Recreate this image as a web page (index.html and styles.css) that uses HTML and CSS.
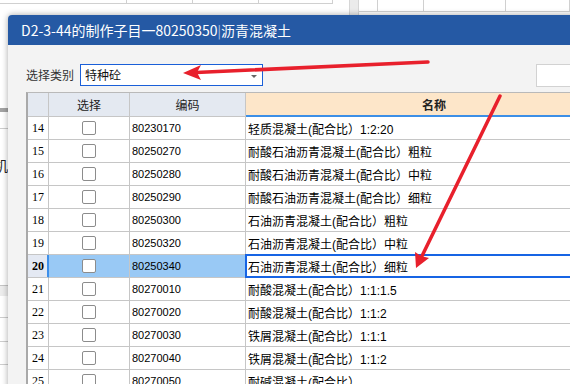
FILE: index.html
```html
<!DOCTYPE html>
<html lang="zh-CN">
<head>
    <meta charset="UTF-8">
    <title>制作子目</title>
    <link rel="stylesheet" href="styles.css">
</head>
<body>
<div class="app">
    <div class="topbar">
        <div class="tcell" style="width:127px"></div>
        <div class="tcell" style="width:66px"></div>
        <div class="tcell" style="width:66px"></div>
        <div class="tcell" style="width:74px"></div>
        <div class="tgap"></div>
        <div class="tscroll"></div>
        <div class="tcell tall" style="width:19px"></div>
        <div class="tcell tall" style="width:46px"></div>
        <div class="tcell tall" style="width:82px"></div>
        <div class="tcell tall" style="width:64px"></div>
    </div>
    <div class="side">
        <div class="s-gap"></div>
        <div class="s-band"></div>
        <div class="s-line"></div>
        <div class="s-text">机</div>
        <div class="s-grey"></div>
        <div class="s-line" style="height:22px"></div>
        <div class="s-line" style="height:24px"></div>
        <div class="s-line" style="height:23px"></div>
    </div>

    <div class="dialog">
        <div class="title">D2-3-44的制作子目一80250350<span class="bar">|</span>沥青混凝土</div>
        <div class="dlg-body">
            <div class="toolbar">
                <span class="label">选择类别</span>
                <div class="select">特种砼<span class="caret"></span></div>
                <div class="search"></div>
            </div>

            <div class="grid">
                <div class="row head">
                    <div class="cell num"></div>
                    <div class="cell chk">选择</div>
                    <div class="cell code">编码</div>
                    <div class="cell name">名称</div>
                </div>
                <div class="row">
                    <div class="cell num">14</div>
                    <div class="cell chk"><span class="box"></span></div>
                    <div class="cell code">80230170</div>
                    <div class="cell name">轻质混凝土(配合比）1:2:20</div>
                </div>
                <div class="row">
                    <div class="cell num">15</div>
                    <div class="cell chk"><span class="box"></span></div>
                    <div class="cell code">80250270</div>
                    <div class="cell name">耐酸石油沥青混凝土(配合比）粗粒</div>
                </div>
                <div class="row">
                    <div class="cell num">16</div>
                    <div class="cell chk"><span class="box"></span></div>
                    <div class="cell code">80250280</div>
                    <div class="cell name">耐酸石油沥青混凝土(配合比）中粒</div>
                </div>
                <div class="row">
                    <div class="cell num">17</div>
                    <div class="cell chk"><span class="box"></span></div>
                    <div class="cell code">80250290</div>
                    <div class="cell name">耐酸石油沥青混凝土(配合比）细粒</div>
                </div>
                <div class="row">
                    <div class="cell num">18</div>
                    <div class="cell chk"><span class="box"></span></div>
                    <div class="cell code">80250300</div>
                    <div class="cell name">石油沥青混凝土(配合比）粗粒</div>
                </div>
                <div class="row">
                    <div class="cell num">19</div>
                    <div class="cell chk"><span class="box"></span></div>
                    <div class="cell code">80250320</div>
                    <div class="cell name">石油沥青混凝土(配合比）中粒</div>
                </div>
                <div class="row sel">
                    <div class="cell num">20</div>
                    <div class="cell chk"><span class="box"></span></div>
                    <div class="cell code">80250340</div>
                    <div class="cell name">石油沥青混凝土(配合比）细粒</div>
                </div>
                <div class="row">
                    <div class="cell num">21</div>
                    <div class="cell chk"><span class="box"></span></div>
                    <div class="cell code">80270010</div>
                    <div class="cell name">耐酸混凝土(配合比）1:1:1.5</div>
                </div>
                <div class="row">
                    <div class="cell num">22</div>
                    <div class="cell chk"><span class="box"></span></div>
                    <div class="cell code">80270020</div>
                    <div class="cell name">耐酸混凝土(配合比）1:1:2</div>
                </div>
                <div class="row">
                    <div class="cell num">23</div>
                    <div class="cell chk"><span class="box"></span></div>
                    <div class="cell code">80270030</div>
                    <div class="cell name">铁屑混凝土(配合比）1:1:1</div>
                </div>
                <div class="row">
                    <div class="cell num">24</div>
                    <div class="cell chk"><span class="box"></span></div>
                    <div class="cell code">80270040</div>
                    <div class="cell name">铁屑混凝土(配合比）1:1:2</div>
                </div>
                <div class="row">
                    <div class="cell num">25</div>
                    <div class="cell chk"><span class="box"></span></div>
                    <div class="cell code">80270050</div>
                    <div class="cell name">耐碱混凝土(配合比）</div>
                </div>
            </div>
        </div>
    </div>

    <!-- red annotation arrows -->
    <svg class="marks" width="570" height="384" viewBox="0 0 570 384">
        <line x1="428" y1="62" x2="196" y2="72.5" stroke="#e8202c" stroke-width="3.5" stroke-linecap="round"/>
        <polygon points="183,73 201,65 197,72.6 201,80" fill="#e8202c"/>
        <line x1="500" y1="96" x2="422" y2="256" stroke="#e8202c" stroke-width="3.5" stroke-linecap="round"/>
        <polygon points="416,268 415,252 421,256 429,258" fill="#e8202c"/>
    </svg>
</div>
</body>
</html>
```

FILE: styles.css
```css
html, body {
    margin: 0;
    padding: 0;
}
body {
    font-family: "Noto Sans CJK SC", sans-serif;
    background: #fff;
}
.app {
    position: relative;
    width: 570px;
    height: 384px;
    overflow: hidden;
    background: #fff;
}

/* the window behind the dialog */
.topbar {
    display: flex;
    height: 15px;
}
.tcell {
    height: 4px;
    border-right: 1px solid #d0d0d0;
    border-bottom: 1px solid #d0d0d0;
    box-sizing: border-box;
}
.tcell.tall {
    height: 12px;
}
.tgap {
    width: 16px;
}
.tscroll {
    width: 10px;
    height: 15px;
    background: #ebebeb;
    border-left: 1px solid #d6d6d6;
    border-right: 1px solid #d6d6d6;
    box-sizing: border-box;
}
.side {
    width: 8px;
}
.s-gap {
    height: 93px;
}
.s-band {
    height: 4px;
    background: #a3a3a3;
}
.s-line {
    height: 17px;
    border-bottom: 1px solid #cdcdcd;
    box-sizing: border-box;
}
.s-text {
    height: 156px;
    font-size: 14px;
    line-height: 16px;
    padding-top: 28px;
    margin-left: -6px;
    box-sizing: border-box;
    color: #222;
}
.s-grey {
    height: 11px;
    background: #ececec;
    border-top: 1px solid #c4c4c4;
    box-sizing: border-box;
}

/* dialog */
.dialog {
    position: absolute;
    left: 8px;
    top: 15px;
    width: 640px;
    height: 400px;
    background: #f3f3f3;
    border-top-left-radius: 4px;
    overflow: hidden;
    box-shadow: 0 0 6px rgba(0, 0, 0, 0.35);
}
.title {
    height: 30px;
    line-height: 30px;
    padding-left: 13px;
    background: #2559a4;
    color: #fff;
    font-size: 14px;
}
.title .bar {
    color: #b9cbe6;
    font-size: 13px;
}
.toolbar {
    display: flex;
    height: 47px;
    padding-top: 19px;
    padding-left: 18px;
    box-sizing: border-box;
    align-items: flex-start;
}
.label {
    font-size: 12px;
    color: #333;
    line-height: 22px;
    width: 54px;
}
.select {
    position: relative;
    width: 183px;
    height: 22px;
    line-height: 20px;
    padding-left: 4px;
    border: 1px solid #1a5fd8;
    background: #fff;
    box-sizing: border-box;
    font-size: 12px;
    color: #111;
}
.caret {
    position: absolute;
    right: 5px;
    top: 10px;
    border-left: 3px solid transparent;
    border-right: 3px solid transparent;
    border-top: 3px solid #666;
}
.search {
    margin-left: 273px;
    width: 60px;
    height: 23px;
    background: #fff;
    border: 1px solid #d2d2d2;
    box-sizing: border-box;
}

/* grid */
.grid {
    margin-left: 18px;
    width: 596px;
    border-top: 1px solid #b9b9b9;
    border-left: 2px solid #a9a9a9;
    background: #fff;
}
.row {
    display: flex;
    height: 23px;
}
.row.head {
    height: 24px;
}
.cell {
    display: flex;
    align-items: center;
    height: 100%;
    box-sizing: border-box;
    border-right: 1px solid #c6c6c6;
    border-bottom: 1px solid #c6c6c6;
    color: #000;
    white-space: nowrap;
}
.num {
    width: 21px;
    padding-left: 4px;
    font-family: "Liberation Serif", serif;
    font-size: 12px;
}
.chk {
    width: 81px;
    justify-content: center;
}
.code {
    width: 116px;
    padding-left: 2px;
    font-family: "Liberation Sans", sans-serif;
    font-size: 11px;
}
.name {
    width: 377px;
    padding-left: 2px;
    font-family: "Liberation Sans", "Noto Sans CJK SC", sans-serif;
    font-size: 12px;
}
.head .cell {
    background: #e4e9f1;
    font-family: "Noto Sans CJK SC", sans-serif;
    font-size: 12px;
    color: #222;
    justify-content: center;
    padding-left: 0;
}
.head .name {
    background: #fde6c9;
    font-weight: bold;
    border-bottom: 2px solid #3c8fe6;
}
.box {
    width: 14px;
    height: 14px;
    border: 1px solid #8c8c8c;
    border-radius: 2px;
    background: #fff;
    box-sizing: border-box;
}
.sel .num {
    background: #e4e9f3;
    font-weight: bold;
    border-right-color: #3d8fea;
    box-shadow: inset -1px 0 #3d8fea;
}
.sel .chk,
.sel .code {
    background: #99c9f5;
}
.sel .name {
    position: relative;
}
.sel .name::after {
    content: "";
    position: absolute;
    left: -1px;
    top: -1px;
    right: 0;
    bottom: -1px;
    border: 2px solid #1764e4;
}

.marks {
    position: absolute;
    left: 0;
    top: 0;
    pointer-events: none;
}
```
